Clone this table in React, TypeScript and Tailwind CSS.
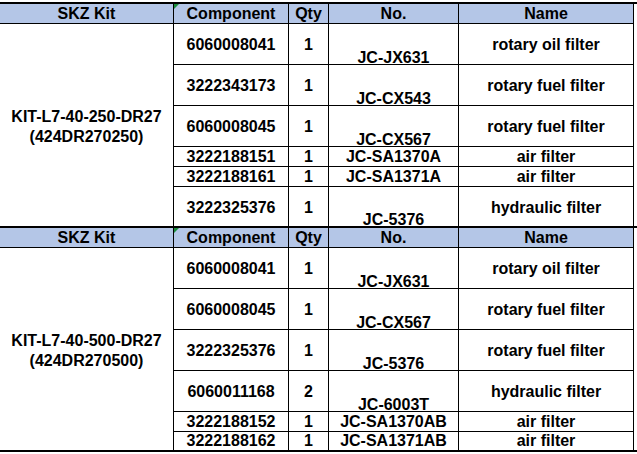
import React from "react";

type Row = { component: string; qty: string; no: string; name: string; tall: boolean };

interface Section {
  kit: string;
  code: string;
  rows: Row[];
}

const sections: Section[] = [
  {
    kit: "KIT-L7-40-250-DR27",
    code: "(424DR270250)",
    rows: [
      { component: "6060008041", qty: "1", no: "JC-JX631", name: "rotary oil filter", tall: true },
      { component: "3222343173", qty: "1", no: "JC-CX543", name: "rotary fuel filter", tall: true },
      { component: "6060008045", qty: "1", no: "JC-CX567", name: "rotary fuel filter", tall: true },
      { component: "3222188151", qty: "1", no: "JC-SA1370A", name: "air filter", tall: false },
      { component: "3222188161", qty: "1", no: "JC-SA1371A", name: "air filter", tall: false },
      { component: "3222325376", qty: "1", no: "JC-5376", name: "hydraulic filter", tall: true },
    ],
  },
  {
    kit: "KIT-L7-40-500-DR27",
    code: "(424DR270500)",
    rows: [
      { component: "6060008041", qty: "1", no: "JC-JX631", name: "rotary oil filter", tall: true },
      { component: "6060008045", qty: "1", no: "JC-CX567", name: "rotary fuel filter", tall: true },
      { component: "3222325376", qty: "1", no: "JC-5376", name: "rotary fuel filter", tall: true },
      { component: "6060011168", qty: "2", no: "JC-6003T", name: "hydraulic filter", tall: true },
      { component: "3222188152", qty: "1", no: "JC-SA1370AB", name: "air filter", tall: false },
      { component: "3222188162", qty: "1", no: "JC-SA1371AB", name: "air filter", tall: false },
    ],
  },
];

const cell = "bg-white flex items-center justify-center";
const head = "bg-[#b4c6e7] flex items-center justify-center leading-[18px]";

const KitSection: React.FC<{ section: Section; last: boolean }> = ({ section, last }) => {
  // last row of each block is 1px shorter so the thick rule lands where it does in the sheet
  const heights = section.rows.map((r, i) => {
    const h = r.tall ? 40 : 19;
    return i === section.rows.length - 1 ? h - 1 : h;
  });

  return (
    <div className={`border-t-2 border-black ${last ? "border-b-2" : ""}`}>
      <div
        className="grid w-[634px] grid-cols-[173px_114px_39px_129px_174px] gap-px border-r border-black bg-black"
        style={{ gridTemplateRows: `19px ${heights.map((h) => `${h}px`).join(" ")}` }}
      >
        <div className={head}>SKZ Kit</div>
        <div className={`${head} relative`}>
          <span className="absolute left-0 top-0 h-0 w-0 border-r-[5px] border-t-[5px] border-r-transparent border-t-[#1a8c3c]" />
          Component
        </div>
        <div className={head}>Qty</div>
        <div className={head}>No.</div>
        <div className={head}>Name</div>

        <div className="row-span-6 flex flex-col items-center justify-center bg-white pt-[4px] leading-[20px]">
          <span>{section.kit}</span>
          <span>{section.code}</span>
        </div>

        {section.rows.map((r, i) => (
          <React.Fragment key={i}>
            <div className={`${cell} ${r.tall ? "pt-[2px]" : ""}`}>{r.component}</div>
            <div className={`${cell} ${r.tall ? "pt-[2px]" : ""}`}>{r.qty}</div>
            {r.tall ? (
              <div className="flex items-end justify-center bg-white">
                <span className="leading-[13px]">{r.no}</span>
              </div>
            ) : (
              <div className={cell}>{r.no}</div>
            )}
            <div className={`${cell} ${r.tall ? "pt-[2px]" : ""}`}>{r.name}</div>
          </React.Fragment>
        ))}
      </div>
    </div>
  );
};

export default function App() {
  return (
    <div className="h-[454px] w-[637px] overflow-hidden bg-white pt-[2px] font-['Liberation_Sans',Arial,sans-serif] text-[16px] font-bold leading-[18px] text-black">
      {sections.map((s, i) => (
        <KitSection key={i} section={s} last={i === sections.length - 1} />
      ))}
    </div>
  );
}
